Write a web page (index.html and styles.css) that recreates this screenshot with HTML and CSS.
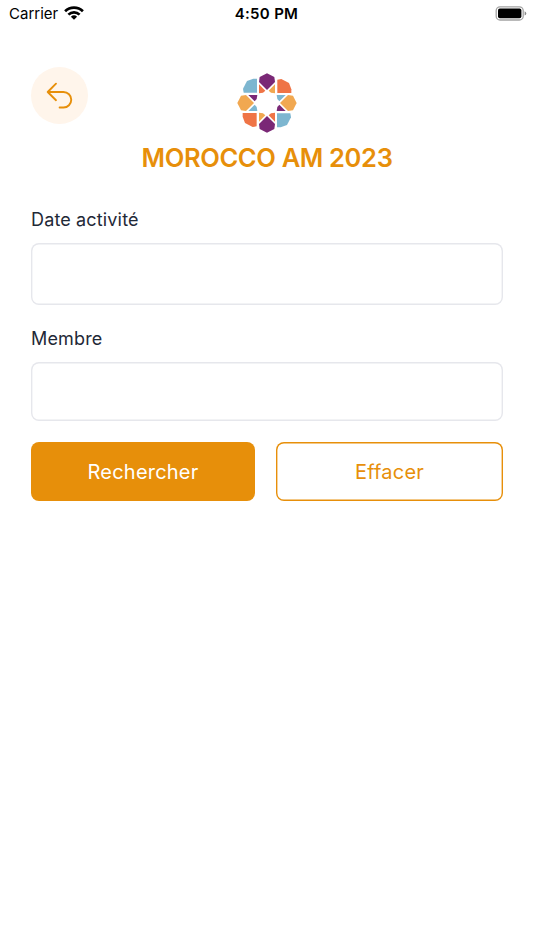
FILE: index.html
```html
<!DOCTYPE html>
<html lang="fr">
<head>
    <meta charset="UTF-8">
    <meta name="viewport" content="width=device-width, initial-scale=1.0">
    <title>MOROCCO AM 2023</title>
    <link rel="stylesheet" href="styles.css">
</head>
<body>
    <div class="status">
        <div class="carrier">
            <span>Carrier</span>
            <svg class="wifi" width="20" height="14" viewBox="0 0 20 14" fill="none" stroke="#000" stroke-width="2.7">
                <path d="M1.1 5.2a12.7 12.7 0 0 1 17.8 0"/>
                <path d="M4.4 8.6a8 8 0 0 1 11.2 0"/>
                <path d="M10 13.8L6.9 10.7a4.5 4.5 0 0 1 6.2 0z" fill="#000" stroke="none"/>
            </svg>
        </div>
        <div class="time">4:50 PM</div>
        <svg class="battery" width="32" height="15" viewBox="0 0 32 15">
            <rect x="1.2" y="0.8" width="27" height="13.2" rx="3.8" fill="#fff" stroke="#a3a3a3" stroke-width="1.3"/>
            <rect x="3" y="2.6" width="23.4" height="9.6" rx="1.8" fill="#000"/>
            <path d="M29.6 5.2q1.7.8 1.7 2.2t-1.7 2.2z" fill="#8a8a8a"/>
        </svg>
    </div>

    <div class="header">
        <button class="back" aria-label="Retour">
            <svg width="57" height="57" viewBox="0 0 57 57" fill="none" stroke="#e78f0a" stroke-width="1.9" stroke-linecap="round" stroke-linejoin="round">
                <path d="M25 16.7L16.7 25L25 33.2M16.7 25H32.5a7.75 7.75 0 0 1 0 15.5H28.6"/>
            </svg>
        </button>
        <div class="brand">
            <svg class="logo" width="70" height="70" viewBox="0 0 210 210">
                <defs>
                    <path id="petal" d="M105 16L127 27L129 42L105 66L81 42L83 27Z"/>
                    <path id="corner" d="M136 75V35L148 33L171 45L178 64V75Z"/>
                    <path id="left" d="M81 49V76L93 74L100 68Z"/>
                    <path id="right" d="M129 49V76L117 74L110 68Z"/>
                </defs>
                <use href="#petal" fill="#7a2876"/>
                <use href="#petal" fill="#f1a851" transform="rotate(90 105 105)"/>
                <use href="#petal" fill="#7a2876" transform="rotate(180 105 105)"/>
                <use href="#petal" fill="#f1a851" transform="rotate(270 105 105)"/>
                <use href="#corner" fill="#ef7446"/>
                <use href="#corner" fill="#7db6d0" transform="rotate(90 105 105)"/>
                <use href="#corner" fill="#ef7446" transform="rotate(180 105 105)"/>
                <use href="#corner" fill="#7db6d0" transform="rotate(270 105 105)"/>
                <use href="#left" fill="#ef7446"/>
                <use href="#right" fill="#f1a851"/>
                <use href="#left" fill="#7db6d0" transform="rotate(90 105 105)"/>
                <use href="#right" fill="#7a2876" transform="rotate(90 105 105)"/>
                <use href="#left" fill="#ef7446" transform="rotate(180 105 105)"/>
                <use href="#right" fill="#f1a851" transform="rotate(180 105 105)"/>
                <use href="#left" fill="#7db6d0" transform="rotate(270 105 105)"/>
                <use href="#right" fill="#7a2876" transform="rotate(270 105 105)"/>
            </svg>
            <h1 class="title">MOROCCO AM 2023</h1>
        </div>
    </div>

    <form class="search">
        <label class="label" for="date">Date activité</label>
        <input class="field date" id="date" type="text">
        <label class="label" for="membre">Membre</label>
        <input class="field" id="membre" type="text">
        <div class="actions">
            <button class="btn primary" type="button">Rechercher</button>
            <button class="btn outline" type="button">Effacer</button>
        </div>
    </form>
</body>
</html>
```
FILE: styles.css
```css
* {box-sizing: border-box;}
body {margin: 0; min-height: 950px; background: #fff; font-family: Inter, "Liberation Sans", sans-serif;}

.status {display: grid; grid-template-columns: 1fr auto 1fr; align-items: center; height: 27px; padding: 0 7px 0 9px; font-size: 15px; color: #000;}
.carrier {display: flex; align-items: center; gap: 6px;}
.wifi {margin-top: -1px;}
.time {margin-right: 3px; font-weight: 600; font-size: 15px; letter-spacing: 0.3px;}
.battery {justify-self: end; margin-top: -1px;}

.header {display: grid; grid-template-columns: 57px 1fr 57px; padding: 40px 31px 0;}
.back {width: 57px; height: 57px; padding: 0; border: 0; border-radius: 50%; background: #fff5eb;}
.back svg {display: block;}
.brand {display: flex; flex-direction: column; align-items: center; padding-top: 1px;}
.logo {display: block;}
.title {margin: 4px 0 0; font-size: 25.5px; line-height: 32px; font-weight: 600; letter-spacing: -0.35px; color: #e78f0a; white-space: nowrap;}

.search {display: flex; flex-direction: column; padding: 33px 31px 0;}
.label {height: 36px; line-height: 26px; font-size: 18px; font-weight: 400; letter-spacing: 0.15px; color: #1f2937;}
.field {width: 100%; height: 59px; padding: 0 16px; border: 0; border-radius: 8px; background: #fff; box-shadow: inset 0 0 0 1.4px #e6e7ec; font: inherit; font-size: 18px; outline: 0;}
.date {height: 62px; margin-bottom: 21px;}
.actions {display: grid; grid-template-columns: 224px 227px; justify-content: space-between; margin-top: 21px;}
.btn {height: 59px; padding: 0; border: 0; border-radius: 8px; font-family: inherit; font-size: 20px; font-weight: 400; letter-spacing: 0.2px;}
.primary {background: #e78f0a; color: #fff;}
.outline {background: #fff; color: #e78f0a; box-shadow: inset 0 0 0 1.4px #e78f0a;}
```
